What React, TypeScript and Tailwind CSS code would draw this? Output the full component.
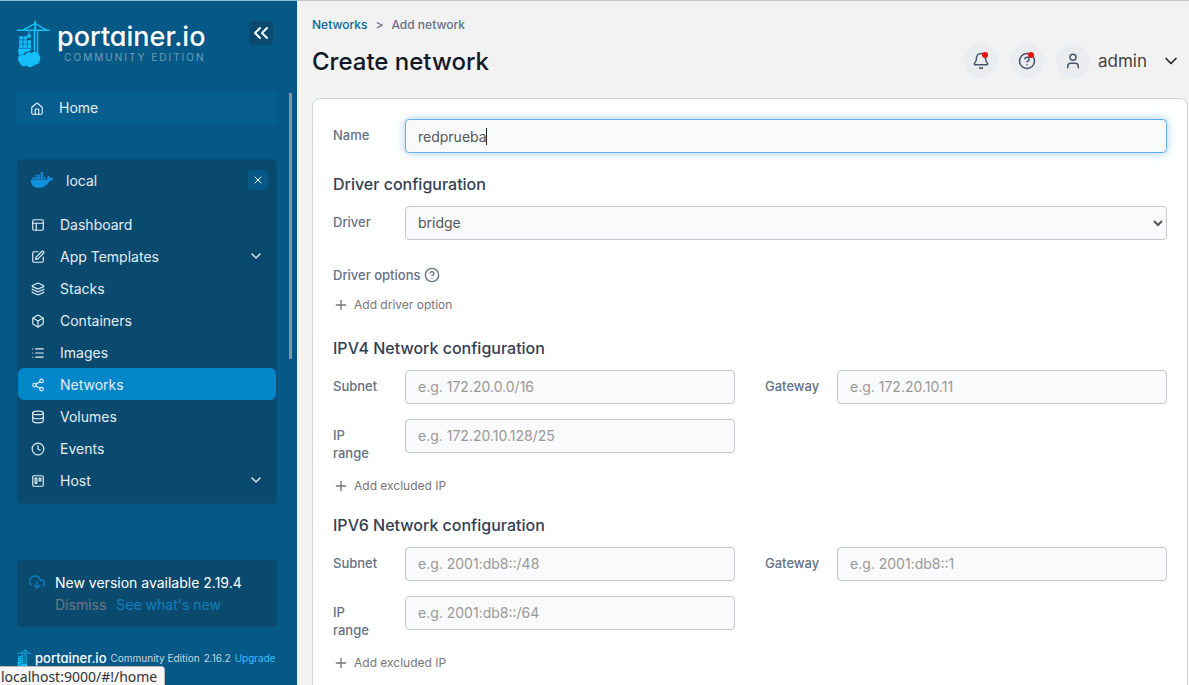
import { useState, type ReactNode } from "react";
import {
  Bell,
  Box,
  ChevronDown,
  ChevronsLeft,
  CircleHelp,
  Clock,
  Database,
  Home,
  Layers,
  List,
  PanelsTopLeft,
  Plus,
  Share2,
  SquarePen,
  Trello,
  User,
  X,
  type LucideIcon,
} from "lucide-react";
import { FaDocker } from "react-icons/fa";

const menu: { label: string; icon: LucideIcon; expandable?: boolean; active?: boolean }[] = [
  { label: "Dashboard", icon: PanelsTopLeft },
  { label: "App Templates", icon: SquarePen, expandable: true },
  { label: "Stacks", icon: Layers },
  { label: "Containers", icon: Box },
  { label: "Images", icon: List },
  { label: "Networks", icon: Share2, active: true },
  { label: "Volumes", icon: Database },
  { label: "Events", icon: Clock },
  { label: "Host", icon: Trello, expandable: true },
];

function CraneLogo({ className }: { className: string }) {
  return (
    <svg viewBox="0 0 33 47" className={className} fill="#13bef9" aria-hidden="true">
      <path d="M17.2 0h1.8v2.2L30 8.6h2.5V10H21.2v22h-1.4V10h-1.6v20h-1.6V10H0V8.600h5.600L17.200 2.200zM17.200 3.800L8.600 8.600h8.600zM19 3.800v4.800h8.300z" />
      <path d="M11.600 10h1.100v3.200h1.100v3.600h-3.600v-3.600h1.400zM6.800 15.200h3.300v3.400H6.800zM2.200 15.200h4v3.400h-4zM2.200 19.200h3.400v3.500H2.200zM6.300 19.200h3.500v3.500H6.300zM10.500 19.200H14v3.500h-3.500zM2.200 23.300h3.400v3.600H2.200zM6.300 23.300h3.500v3.600H6.300zM10.500 23.300H14v3.600h-3.500z" />
      <path d="M1.200 27.600h13.400c-.6 1.500-1.800 2-2.400 3.200-2.800-.8-4.800.4-6 2.600-1.300 0-2.600.4-3.700 1.200-1.300-1.700-1.600-4.400-1.300-7z" />
      <path d="M8 34c.8-2.600 4.500-3.600 6.800-1.800 2-2.400 7-1.700 7.600 2.200 1.300 1.500 1.200 3.500.2 4.900.4 3-2.600 5-5.200 4.200-1.400 3-6.200 3.600-7.900 1-2.800 1.600-6.600.2-6.700-3-3-2-2.300-7.100 1.500-7.500 1.200-.4 2.500-.3 3.700 0z" />
    </svg>
  );
}

function DownloadCloud({ className }: { className: string }) {
  return (
    <svg
      viewBox="0 0 24 24"
      className={className}
      fill="none"
      stroke="currentColor"
      strokeWidth={2}
      strokeLinecap="round"
      strokeLinejoin="round"
      aria-hidden="true"
    >
      <path d="M8 17l4 4 4-4M12 12v9" />
      <path d="M20.880 18.090A5 5 0 0 0 18 9h-1.260A8 8 0 1 0 3 16.290" />
    </svg>
  );
}

function MenuItem({ label, icon: Icon, expandable, active }: (typeof menu)[number]) {
  return (
    <li>
      <a
        href="#"
        className={`flex h-8 items-center rounded-md pr-3 pl-[13px] text-[14px] leading-5 text-[#e3eef5] ${
          active ? "bg-[#0086c9]" : ""
        }`}
      >
        <Icon className="mt-0.5 size-[14px] shrink-0" strokeWidth={2} />
        <span className="ml-[15px] flex-1 pt-px">{label}</span>
        {expandable && <ChevronDown className="size-4" strokeWidth={2} />}
      </a>
    </li>
  );
}

function Sidebar() {
  return (
    <aside className="flex w-[297px] shrink-0 flex-col border-t border-[#8fbdd4] bg-[#065986] text-white">
      <header className="flex items-start justify-between pt-5 pr-6 pl-[17px]">
        <a href="#" className="flex items-start">
          <CraneLogo className="h-[47px] w-[33px]" />
          <span className="ml-[7px] flex flex-col items-end">
            <span className="text-[27px] leading-8 font-medium [font-feature-settings:'cv11']">portainer.io</span>
            <span className="text-[10px] leading-2 tracking-[2px] text-[#6f9dba]">COMMUNITY EDITION</span>
          </span>
        </a>
        <button aria-label="Collapse sidebar" className="flex size-6 items-center justify-center rounded bg-[#0b4a6f]">
          <ChevronsLeft className="size-6" strokeWidth={2} />
        </button>
      </header>

      <div className="mt-6 flex min-h-0 flex-1 justify-between overflow-hidden pr-[5px] pl-[17px]">
        <nav className="w-[260px]">
          <a
            href="#"
            className="flex h-8 items-center rounded bg-[#065e8f] pl-[13px] text-[14px] leading-5 text-[#e3eef5]"
          >
            <Home className="mt-0.5 size-[14px]" strokeWidth={2} />
            <span className="ml-[15px]">Home</span>
          </a>
          <section className="mt-[35px] rounded border border-[#0a4f78] bg-[#0b4a6f] pb-[7px]">
            <div className="flex h-12 items-center pr-2 pb-2 pl-[13px]">
              <FaDocker className="size-[22px] text-[#1191dd]" />
              <span className="ml-[13px] flex-1 pt-px text-[14px] leading-5 text-[#e3eef5]">local</span>
              <button
                aria-label="Close environment"
                className="flex size-5 items-center justify-center rounded-sm bg-[#065986]"
              >
                <X className="size-3" strokeWidth={2} />
              </button>
            </div>
            <ul>
              {menu.map((item) => (
                <MenuItem key={item.label} {...item} />
              ))}
            </ul>
          </section>
        </nav>
        <div className="mt-px h-[266px] w-[3px] bg-[#83949c]" />
      </div>

      <footer className="pr-5 pb-[18px] pl-[17px]">
        <div className="flex rounded bg-[#0b4a6f] px-3 pt-3 pb-[11px] text-[14px] leading-[22px]">
          <DownloadCloud className="mt-[2px] size-4 text-[#0d7fbd]" />
          <div className="ml-[10px]">
            <p>New version available 2.19.4</p>
            <p className="flex gap-[10px]">
              <button className="text-[#6b7880]">Dismiss</button>
              <a href="#" className="text-[#0f7fbd]">
                See what's new
              </a>
            </p>
          </div>
        </div>
        <div className="mt-[22px] flex h-[18px] items-center text-[10px] leading-[18px] whitespace-nowrap text-[#c4d5e0]">
          <CraneLogo className="mt-1 h-[22px] w-[15px]" />
          <span className="ml-[3px] text-[13px] font-medium text-white [font-feature-settings:'cv11']">
            portainer.io
          </span>
          <span className="ml-1">Community Edition</span>
          <span className="ml-1">2.16.2</span>
          <a href="#" className="ml-1 text-[#36bffa]">
            Upgrade
          </a>
        </div>
      </footer>
    </aside>
  );
}

function FieldLabel({ id, children }: { id: string; children: ReactNode }) {
  return (
    <label htmlFor={id} className="w-[72px] shrink-0 pt-[7px] pr-6 text-[13px] leading-[18px] font-medium text-[#667085]">
      {children}
    </label>
  );
}

function Field({ id, label, placeholder }: { id: string; label: string; placeholder: string }) {
  return (
    <div className="flex">
      <FieldLabel id={id}>{label}</FieldLabel>
      <input
        id={id}
        placeholder={placeholder}
        className="h-[34px] min-w-0 flex-1 rounded border border-[#c5c8cc] bg-[#f9fafb] px-3 pb-[2px] text-[14px] text-[#555] placeholder:text-[#999]"
      />
    </div>
  );
}

function SectionTitle({ children }: { children: ReactNode }) {
  return <h2 className="mt-[19px] mb-[10px] text-[16px] leading-6 font-medium text-[#344054]">{children}</h2>;
}

function AddButton({ children }: { children: ReactNode }) {
  return (
    <button type="button" className="flex items-center gap-[5px] text-[12px] leading-4 text-[#767676]">
      <Plus className="size-4" strokeWidth={2} />
      {children}
    </button>
  );
}

function IpSection({
  prefix,
  title,
  subnet,
  gateway,
  range,
}: {
  prefix: string;
  title: string;
  subnet: string;
  gateway: string;
  range: string;
}) {
  return (
    <section>
      <SectionTitle>{title}</SectionTitle>
      <div className="mb-4 grid grid-cols-2 gap-x-[30px] gap-y-[15px]">
        <Field id={`${prefix}-subnet`} label="Subnet" placeholder={subnet} />
        <Field id={`${prefix}-gateway`} label="Gateway" placeholder={gateway} />
        <Field id={`${prefix}-range`} label="IP range" placeholder={range} />
      </div>
      <AddButton>Add excluded IP</AddButton>
    </section>
  );
}

export default function App() {
  const [name, setName] = useState("redprueba");
  return (
    <div className="relative flex h-screen overflow-hidden bg-[#f2f2f2] font-['Inter',sans-serif]">
      <Sidebar />
      <main className="min-w-0 flex-1 border-t border-[#c4c4c8] pr-px pl-[15px]">
        <nav className="flex gap-2 pt-[14px] text-[12px] leading-5 font-medium text-[#667085]">
          <a href="#" className="text-[#0b6797]">
            Networks
          </a>
          <span>&gt;</span>
          <span>Add network</span>
        </nav>
        <header className="mt-[9px] flex h-[34px] items-center justify-between pr-[7px]">
          <h1 className="pt-[2px] text-[24px] leading-8 font-medium text-[#101828]">Create network</h1>
          <div className="flex items-center gap-3 text-[#475467]">
            <button
              aria-label="Notifications"
              className="relative flex size-[34px] items-center justify-center rounded-full bg-[#eaecf0]"
            >
              <Bell className="size-[18px]" strokeWidth={2} />
              <span className="absolute top-2 right-[10px] size-[6px] rounded-full bg-[#e3120b]" />
            </button>
            <button
              aria-label="Help"
              className="relative flex size-[34px] items-center justify-center rounded-full bg-[#eaecf0]"
            >
              <CircleHelp className="size-[18px]" strokeWidth={2} />
              <span className="absolute top-2 right-[10px] size-[6px] rounded-full bg-[#e3120b]" />
            </button>
            <button className="flex items-center">
              <span className="flex size-[34px] items-center justify-center rounded-full bg-[#eaecf0]">
                <User className="size-[18px]" strokeWidth={2} />
              </span>
              <span className="ml-2 text-[17px] leading-6 text-[#444]">admin</span>
              <ChevronDown className="ml-[14px] size-5 text-[#222]" strokeWidth={2} />
            </button>
          </div>
        </header>

        <form className="mt-5 rounded-lg border border-[#d0d5dd] bg-white px-5 pt-5 pb-10">
          <div className="flex">
            <FieldLabel id="name">Name</FieldLabel>
            <div className="relative flex-1">
              <input
                id="name"
                value={name}
                onChange={(e) => setName(e.target.value)}
                className="block h-[34px] w-full rounded border border-[#66afe9] bg-[#f9fafb] px-3 text-[14px] text-[#555] caret-transparent shadow-[0_0_8px_rgba(102,175,233,0.6)] outline-none"
              />
              <span className="pointer-events-none absolute inset-y-0 left-3 flex items-center text-[14px]">
                <span className="invisible" aria-hidden="true">
                  {name}
                </span>
                <span className="h-[17px] w-px bg-[#222]" />
              </span>
            </div>
          </div>

          <SectionTitle>Driver configuration</SectionTitle>
          <div className="flex">
            <FieldLabel id="driver">Driver</FieldLabel>
            <select
              id="driver"
              className="h-[34px] flex-1 rounded border border-[#c5c8cc] bg-[#f9fafb] pr-px pb-[2px] pl-2 text-[14px] text-[#555]"
            >
              <option>bridge</option>
            </select>
          </div>
          <div className="mt-[25px] mb-3 flex items-center gap-1 text-[13px] leading-5 font-medium text-[#667085]">
            Driver options
            <CircleHelp className="size-4" strokeWidth={2} />
          </div>
          <div className="pb-1">
            <AddButton>Add driver option</AddButton>
          </div>

          <IpSection
            prefix="ipv4"
            title="IPV4 Network configuration"
            subnet="e.g. 172.20.0.0/16"
            gateway="e.g. 172.20.10.11"
            range="e.g. 172.20.10.128/25"
          />
          <IpSection
            prefix="ipv6"
            title="IPV6 Network configuration"
            subnet="e.g. 2001:db8::/48"
            gateway="e.g. 2001:db8::1"
            range="e.g. 2001:db8::/64"
          />
        </form>
      </main>
      <div className="absolute bottom-0 left-0 rounded-tr border-t border-r border-[#b8bcc0] bg-[#f7f7f7] pr-[7px] pl-px font-['Noto_Sans',sans-serif] text-[14px] leading-[17px] whitespace-nowrap text-[#333]">
        <span className="inline-block pt-px">localhost:9000/#!/home</span>
      </div>
    </div>
  );
}
